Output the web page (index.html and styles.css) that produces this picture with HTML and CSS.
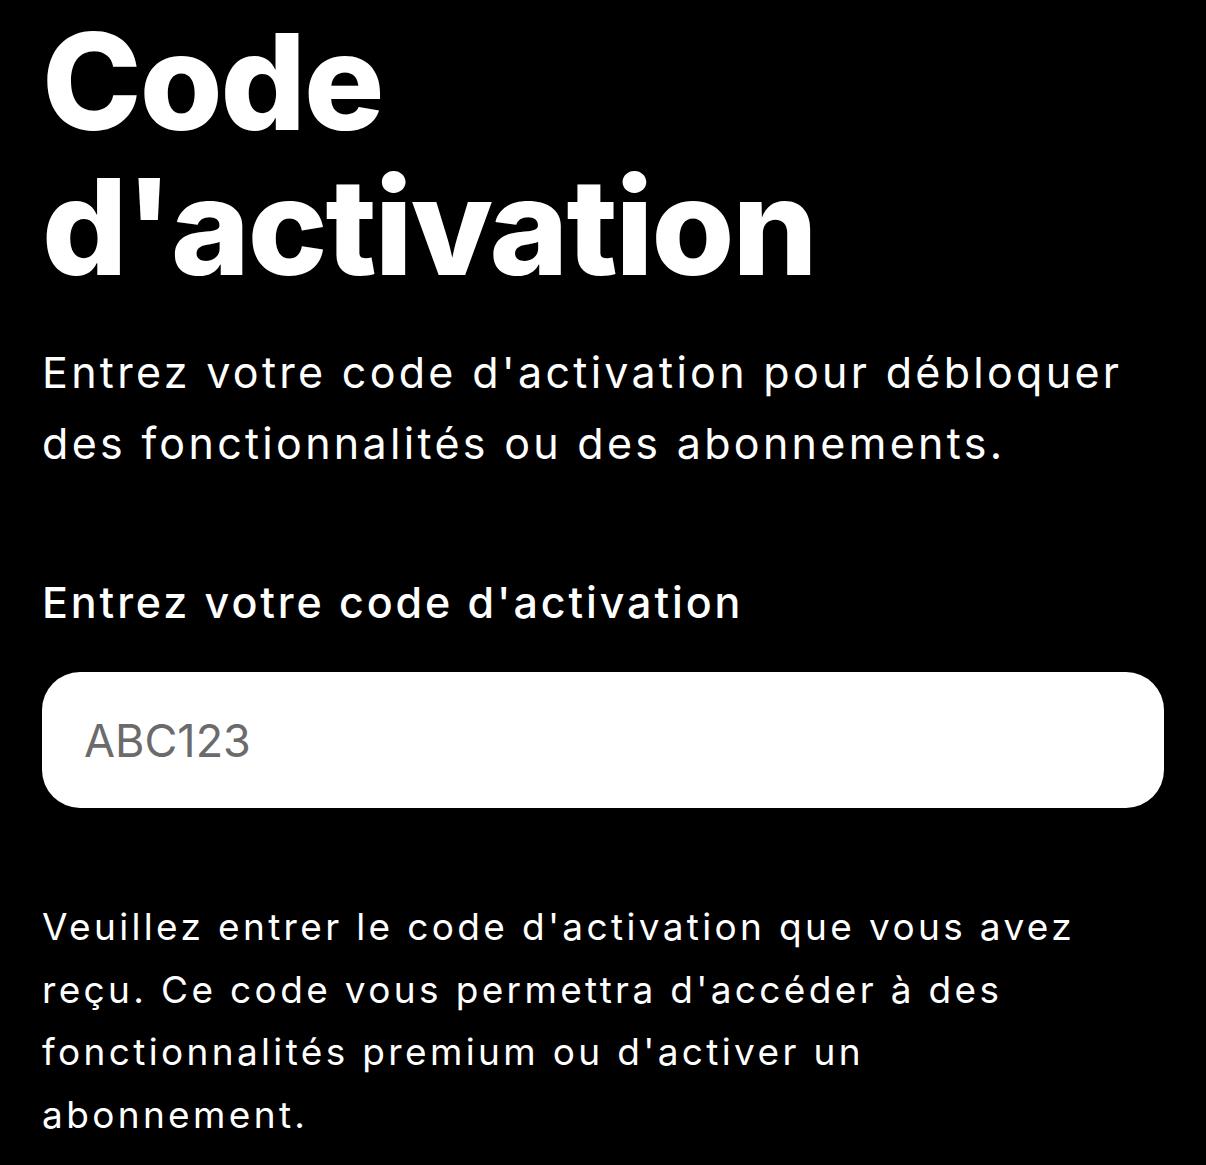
FILE: index.html
```html
<!DOCTYPE html>
<html lang="fr">
  <head>
    <title>Code d'activation</title>
    <meta charset="UTF-8" />
    <meta name="viewport" content="width=device-width" />
    <link rel="stylesheet" href="styles.css">
  </head>
  <body>
    <main class="screen">
      <h1 class="title">Code d'activation</h1>
      <p class="intro">Entrez votre code d'activation pour débloquer des fonctionnalités ou des abonnements.</p>
      <form class="code-form">
        <label for="codeField" class="code-label">Entrez votre code d'activation</label>
        <input type="text" id="codeField" class="code-input" placeholder="ABC123" />
      </form>
      <p class="hint">Veuillez entrer le code d'activation que vous avez reçu. Ce code vous permettra d'accéder à des fonctionnalités premium ou d'activer un abonnement.</p>
    </main>
  </body>
</html>
```

FILE: styles.css
```css
/* Reset */
* {
  margin: 0;
  padding: 0;
  box-sizing: border-box;
  font-family: Inter, "Open Sans", sans-serif;
}

body {
  background-color: #000;
  color: #fff;
}

.screen {
  padding: 0 42px;
}

/* Page title */
.title {
  font-size: 134px;
  font-weight: 800;
  letter-spacing: -2px;
  line-height: 145px;
  padding-top: 9px;
}

/* Intro text */
.intro {
  font-size: 43px;
  letter-spacing: 3.3px;
  line-height: 71px;
  margin-top: 38px;
}

/* Form */
.code-form {
  display: flex;
  flex-direction: column;
  margin-top: 93px;
}

.code-label {
  font-size: 43px;
  font-weight: 500;
  letter-spacing: 2.9px;
  line-height: 60px;
}

.code-input {
  height: 136px;
  margin-top: 40px;
  padding: 0 42px;
  border: none;
  border-radius: 38px;
  background-color: #fff;
  font-size: 45px;
  outline: none;
}

.code-input::placeholder {
  color: #6b6b6b;
}

/* Hint under the field */
.hint {
  max-width: 1080px;
  font-size: 37px;
  letter-spacing: 3.35px;
  line-height: 62.5px;
  margin-top: 88px;
}
```
